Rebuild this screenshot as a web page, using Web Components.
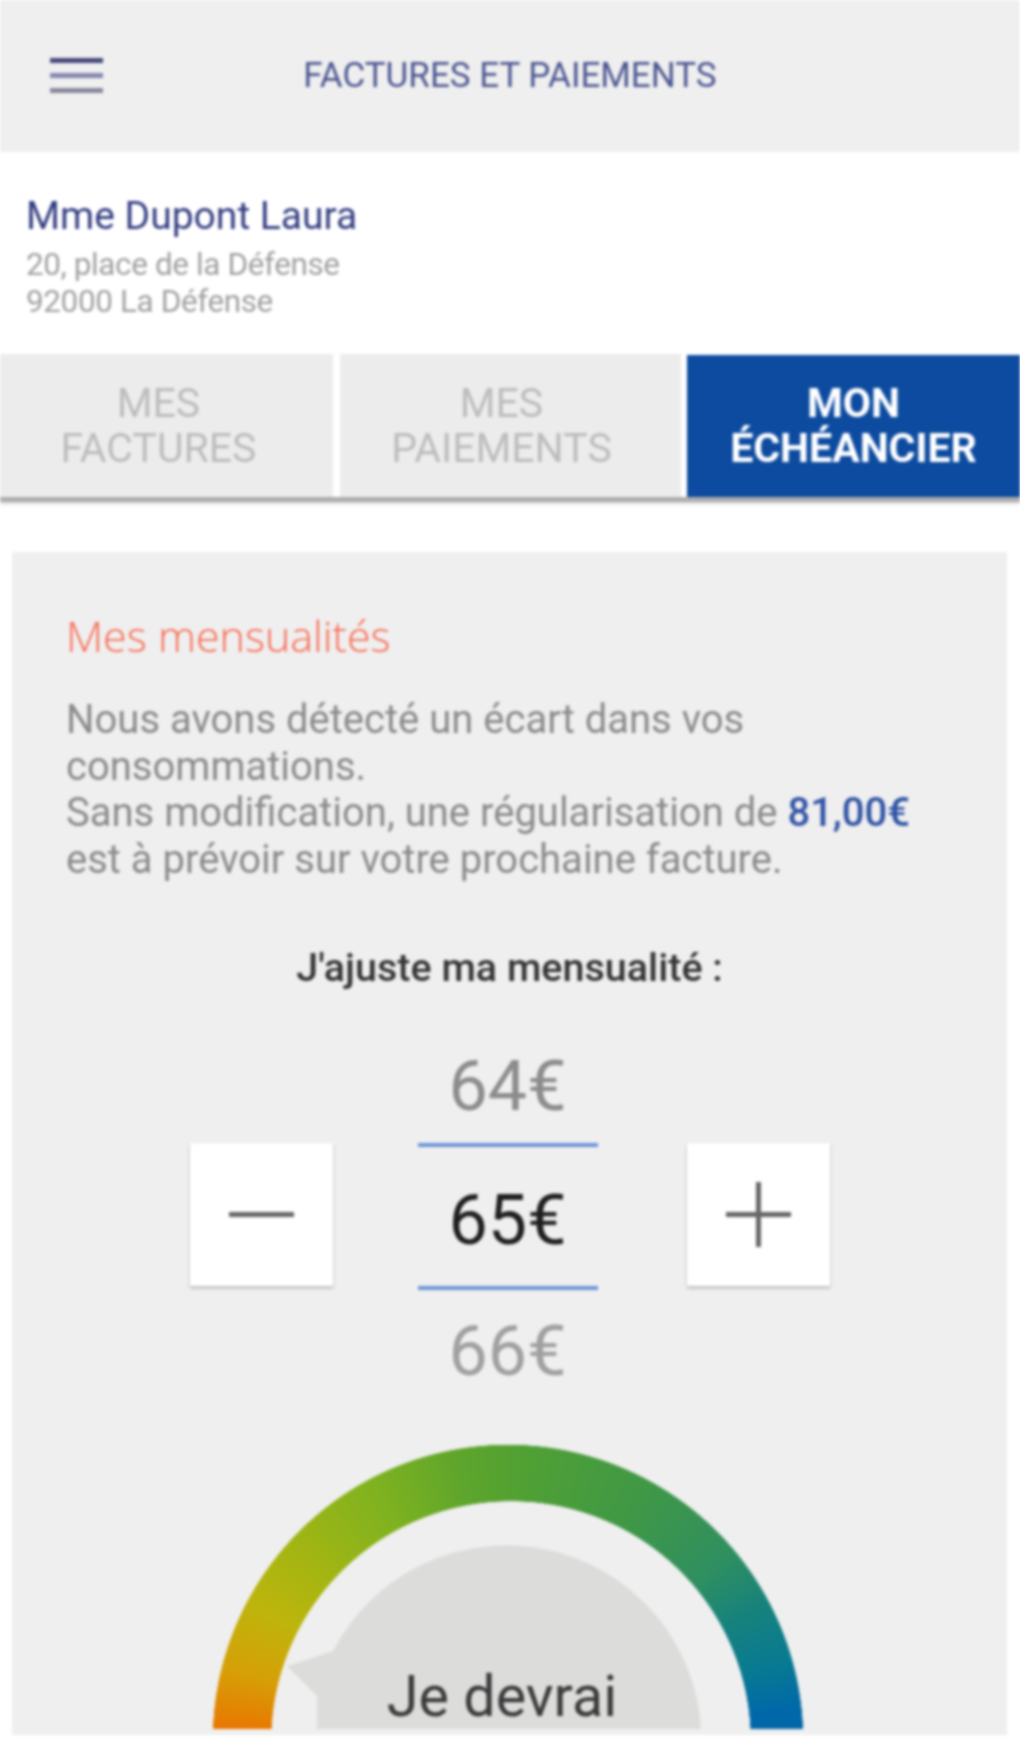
<!doctype html>
<html lang="fr"><head><meta charset="utf-8"><title>Factures et paiements</title>
<style>
html,body{margin:0;padding:0;background:#fff;height:1747px;overflow:hidden}
body{font-family:Roboto,"Liberation Sans",sans-serif;filter:blur(1.4px)}
monthly-card b{color:#2f52a5;font-weight:500}
</style></head><body>
<app-header>FACTURES ET PAIEMENTS</app-header>
<account-info name="Mme Dupont Laura"><span>20, place de la Défense</span><span>92000 La Défense</span></account-info>
<tab-bar>
  <tab-item style="width:333px;padding-right:16px">MES<br>FACTURES</tab-item>
  <tab-item style="width:341px;margin-left:7px;padding-right:18px">MES<br>PAIEMENTS</tab-item>
  <tab-item active style="flex:1;margin-left:6px">MON<br>ÉCHÉANCIER</tab-item>
</tab-bar>
<monthly-card heading="Mes mensualités">
  <p slot="intro">Nous avons détecté un écart dans vos consommations.<br>Sans modification, une régularisation de <b>81,00€</b><br>est à prévoir sur votre prochaine facture.</p>
  <amount-stepper slot="stepper" prev="64€" value="65€" next="66€" label="J'ajuste ma mensualité :"></amount-stepper>
  <gauge-dial slot="gauge">Je devrai</gauge-dial>
</monthly-card>
<script>
const def=(name,html)=>customElements.define(name,class extends HTMLElement{
  connectedCallback(){
    if(this.shadowRoot)return;
    const root=this.attachShadow({mode:"open"});
    let markup=html;
    for(const a of this.getAttributeNames())markup=markup.split("{{"+a+"}}").join(this.getAttribute(a));
    root.innerHTML=markup;
  }
});
def("app-header",`<style>
:host{display:grid;grid-template-columns:1fr auto 1fr;align-items:center;height:152px;background:#efefef;color:#4a5490;font-size:35px;box-sizing:border-box;padding:0 50px 2px 50px}
.m{display:flex;flex-direction:column;gap:10px;width:53px}
.m i{display:block;height:5px;background:#8587b0}
.m i:first-child{background:#45477a}
.m i:last-child{background:#87879c}
</style><div class="m"><i></i><i></i><i></i></div><div><slot></slot></div><div></div>`);
def("account-info",`<style>
:host{display:block;height:200px;box-sizing:border-box;padding:43px 0 0 26px;background:#fff}
.n{font-size:39px;line-height:42px;color:#323c80;margin-bottom:9px}
.a{display:flex;flex-direction:column;font-size:31.500px;line-height:37px;color:#a0a0a0;letter-spacing:-.4px}
::slotted(span){display:block}
</style><div class="n">{{name}}</div><div class="a"><slot></slot></div>`);
def("tab-bar",`<style>
:host{display:flex;height:145px;border-bottom:5px solid #adadad;box-shadow:0 2px 3px rgba(0,0,0,.15);background:#fff}
</style><slot></slot>`);
def("tab-item",`<style>
:host{display:flex;align-items:center;justify-content:center;text-align:center;background:#ececec;color:#bcbcbc;font-size:41px;line-height:45px;box-sizing:border-box;margin-top:2px}
:host([active]){background:#0d4ba0;color:#fff;font-weight:700;margin-top:3px}
</style><div><slot></slot></div>`);
def("monthly-card",`<style>
:host{display:block;margin:50px 12px 0;width:995px;height:1183px;box-sizing:border-box;padding:56px 54px 0;background:#efefef}
h2{margin:0 0 33px;font-weight:300;font-size:43px;line-height:56px;color:#f8664e;font-family:"Open Sans",Roboto,sans-serif}
::slotted(p){margin:0;font-size:40px;line-height:46.500px;color:#8a8a8a}
</style><h2>{{heading}}</h2><slot name="intro"></slot><slot name="stepper"></slot><slot name="gauge"></slot>`);
def("amount-stepper",`<style>
:host{display:block;font-family:Roboto,sans-serif}
.l{margin:62px -54px 0;text-align:center;font-size:39.500px;line-height:46px;font-weight:500;color:#333}
.row{display:grid;grid-template-columns:143px 180px 143px;justify-content:center;column-gap:87px;margin:0 -54px}
.v{grid-column:2;text-align:center;font-size:70px;line-height:80px;color:#8c8c8c;margin:0 2px 0 -2px}
.b{width:143px;height:143px;background:#fff;box-shadow:0 2px 3px rgba(0,0,0,.25);display:flex;align-items:center;justify-content:center}
.cur{margin:0 2px 0 -2px;height:147px;box-sizing:border-box;padding-top:6px;border-top:4px solid #6c94d8;border-bottom:4px solid #6c94d8;color:#1f1f1f;display:flex;align-items:center;justify-content:center;font-size:70px;line-height:80px}
svg{display:block}
.next{color:#a0a0a0}
</style><div class="l">{{label}}</div>
<div class="row" style="margin-top:64px"><div class="v" style="height:62px;line-height:62px">{{prev}}</div></div>
<div class="row" style="margin-top:26px"><div class="b"><svg width="65" height="65" viewBox="0 0 65 65"><path d="M0 32.500H65" stroke="#666" stroke-width="5"/></svg></div><div class="cur">{{value}}</div><div class="b"><svg width="65" height="65" viewBox="0 0 65 65"><path d="M0 32.500H65M32.500 0V65" stroke="#666" stroke-width="5"/></svg></div></div>
<div class="row" style="margin-top:21px"><div class="v next" style="height:80px">{{next}}</div></div>`);
def("gauge-dial",`<style>
:host{display:grid;width:590px;height:285px;margin:53px 0 0 147px;color:#3a3a3a}
:host>*{grid-area:1/1}
.ring{background:conic-gradient(from -90deg at 295px 296px,#ec6f00 0deg,#d69f06 14deg,#bdb50c 28deg,#a3b512 42deg,#7fb21f 62deg,#5ea52c 80deg,#4e9f35 96deg,#409845 118deg,#2f8f60 140deg,#17827c 152deg,#087a92 164deg,#0068a8 174deg,#0068a8 180deg,#ec6f00 181deg);
-webkit-mask:radial-gradient(circle at 298px 297px,transparent 239.500px,#000 240px),radial-gradient(circle at 295px 296px,#000 295px,transparent 295.500px);-webkit-mask-composite:source-in;mask:radial-gradient(circle at 298px 297px,transparent 239.500px,#000 240px),radial-gradient(circle at 295px 296px,#000 295px,transparent 295.500px);mask-composite:intersect}
svg{display:block}
.t{align-self:end;justify-self:center;font-size:57.500px;line-height:58px;margin-bottom:3px;margin-left:-12px;font-family:Roboto,sans-serif}
</style><div class="ring"></div>
<svg width="590" height="285" viewBox="0 0 590 285"><path d="M104 285V252L74 222L120 207A195 195 0 0 1 488 285Z" fill="#dcdcdb"/></svg>
<div class="t"><slot></slot></div>`);
</script>
</body></html>
